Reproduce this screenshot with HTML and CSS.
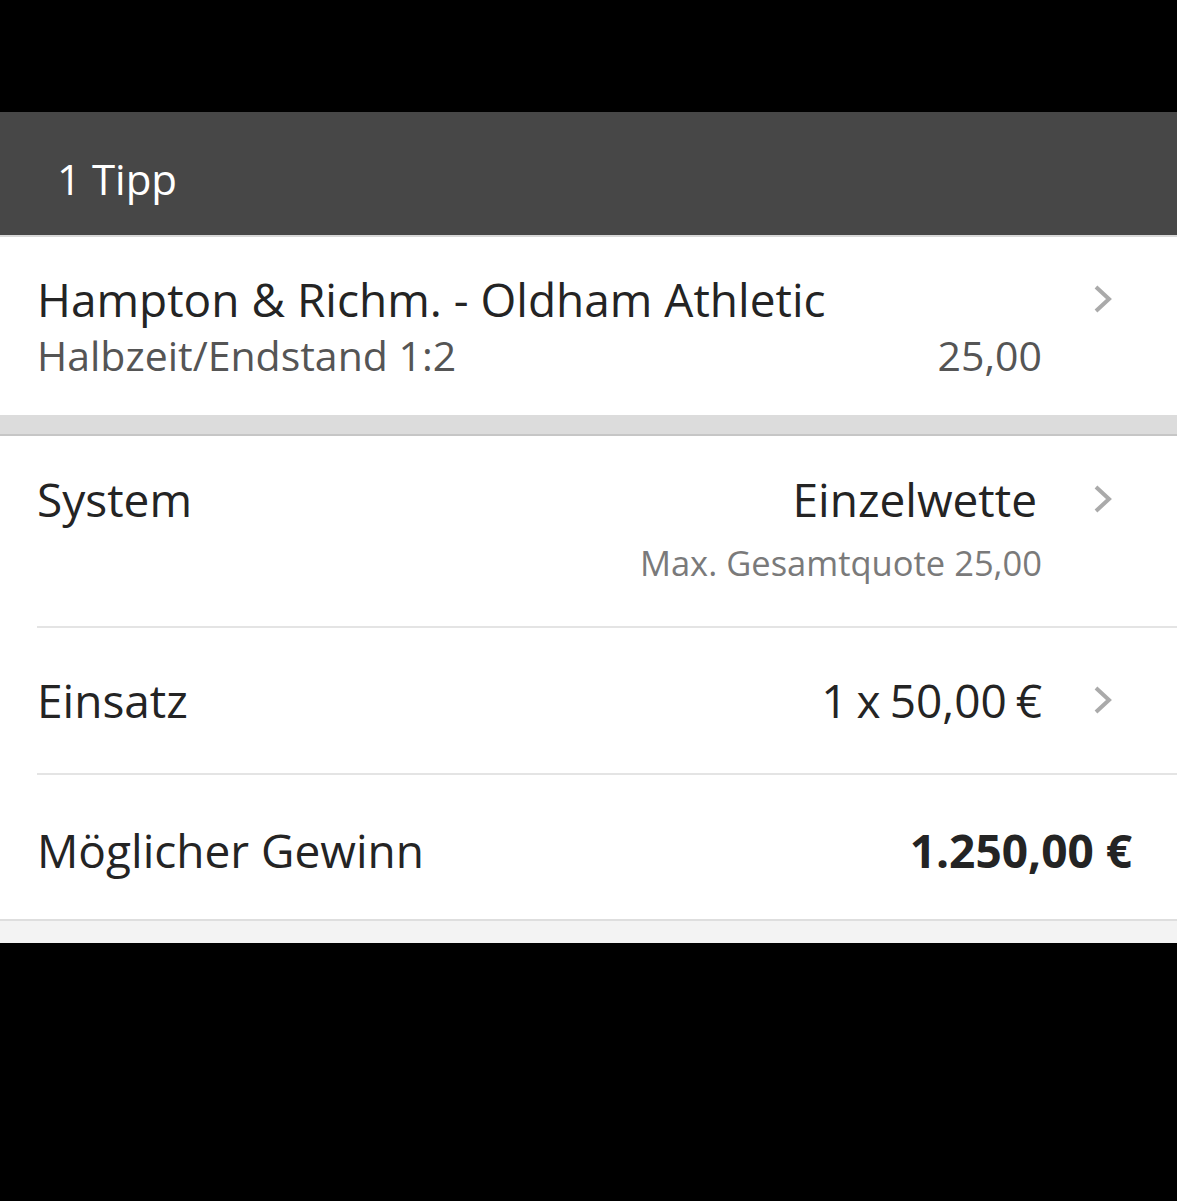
FILE: index.html
```html
<!DOCTYPE html>
<html lang="de">
<head>
<meta charset="utf-8">
<title>1 Tipp</title>
<link rel="stylesheet" href="styles.css">
</head>
<body>
<main class="slip">
  <header class="slip-header">1 Tipp</header>
  <section class="card tip">
    <div class="row-line">
      <span class="title">Hampton &amp; Richm. - Oldham Athletic</span>
      <svg class="chev" viewBox="0 0 20 30" width="20" height="30"><path d="M3 3 L16 15 L3 27" fill="none" stroke="#aaaaaa" stroke-width="4"/></svg>
    </div>
    <div class="row-line sub">
      <span class="subtitle">Halbzeit/Endstand 1:2</span>
      <span class="subtitle odds">25,00</span>
    </div>
  </section>
  <div class="gap"></div>
  <section class="card settings">
    <div class="item system">
      <div class="row-line">
        <span class="label">System</span>
        <span class="value">Einzelwette</span>
        <svg class="chev" viewBox="0 0 20 30" width="20" height="30"><path d="M3 3 L16 15 L3 27" fill="none" stroke="#aaaaaa" stroke-width="4"/></svg>
      </div>
      <div class="row-line note-line">
        <span class="note">Max. Gesamtquote 25,00</span>
      </div>
    </div>
    <div class="item stake">
      <div class="row-line">
        <span class="label">Einsatz</span>
        <span class="value">1 x 50,00 €</span>
        <svg class="chev" viewBox="0 0 20 30" width="20" height="30"><path d="M3 3 L16 15 L3 27" fill="none" stroke="#aaaaaa" stroke-width="4"/></svg>
      </div>
    </div>
    <div class="item win">
      <div class="row-line">
        <span class="label">Möglicher Gewinn</span>
        <span class="value bold">1.250,00 €</span>
      </div>
    </div>
  </section>
  <div class="footer-strip"></div>
</main>
</body>
</html>
```
FILE: styles.css
```css
html, body {
  margin: 0;
  padding: 0;
  background: #000;
}
body {
  font-family: "Open Sans", "Noto Sans", sans-serif;
  width: 1177px;
  height: 1201px;
  overflow: hidden;
}
.slip {
  margin-top: 112px;
  background: #fff;
}
.slip-header {
  background: #474747;
  color: #fff;
  height: 125px;
  box-sizing: border-box;
  padding: 39px 0 0 57px;
  font-size: 42px;
  line-height: 56px;
  border-bottom: 2px solid #d9d9d9;
}
.card {
  background: #fff;
}
.row-line {
  display: flex;
  align-items: center;
}
.tip {
  padding: 32px 0 0 37px;
  height: 178px;
  box-sizing: border-box;
}
.title {
  flex: 1;
  font-size: 46px;
  line-height: 60px;
  color: #242424;
}
.chev {
  display: block;
  margin: 0 64px 0 0;
  flex: none;
}
.sub {
  padding-right: 135px;
}
.subtitle {
  font-size: 41px;
  line-height: 52px;
  color: #555;
}
.subtitle:first-child {
  flex: 1;
}
.gap {
  height: 21px;
  background: #dcdcdc;
  border-bottom: 2px solid #c6c6c6;
  box-sizing: border-box;
}
.settings {
  border-bottom: 2px solid #dedede;
}
.item {
  margin-left: 37px;
  border-bottom: 2px solid #e4e4e4;
  box-sizing: border-box;
}
.item:last-child {
  border-bottom: none;
}
.system {
  height: 192px;
  padding-top: 33px;
}
.stake {
  height: 147px;
  padding-top: 42px;
}
.win {
  height: 144px;
  padding-top: 45px;
}
.label {
  flex: 1;
  font-size: 46px;
  line-height: 60px;
  color: #242424;
}
.value {
  font-size: 46px;
  line-height: 60px;
  color: #242424;
  margin-right: 51px;
}
.stake .value {
  word-spacing: -3px;
}
.system .value {
  margin-right: 56px;
}
.value.bold {
  font-weight: 700;
  margin-right: 45px;
}
.note-line {
  justify-content: flex-end;
  margin-top: 11px;
  padding-right: 135px;
}
.note {
  font-size: 34.5px;
  line-height: 46px;
  color: #7a7a7a;
}
.footer-strip {
  height: 22px;
  background: #f3f3f3;
}
```
